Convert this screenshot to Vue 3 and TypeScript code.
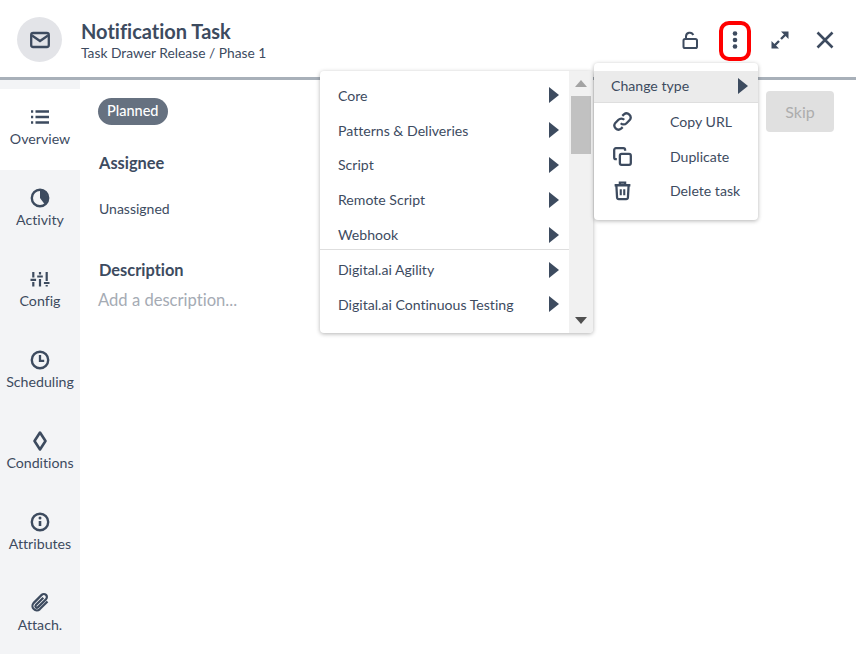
<template>
  <div class="drawer">
    <header class="drawer-header">
      <div class="avatar">
        <svg viewBox="0 0 24 24" class="avatar-icon">
          <rect x="3.2" y="5" width="17.6" height="14" rx="2" fill="none" stroke="currentColor" stroke-width="2.300" />
          <path d="M4 7.500l8 5.500 8-5.500" fill="none" stroke="currentColor" stroke-width="2.300" />
        </svg>
      </div>
      <div class="titles">
        <div class="title">Notification Task</div>
        <div class="subtitle">Task Drawer Release / Phase 1</div>
      </div>
      <div class="actions">
        <button class="action">
          <svg viewBox="0 0 24 24">
            <rect x="5.500" y="11" width="13.500" height="9" rx="1.600" fill="none" stroke="currentColor" stroke-width="2" />
            <path d="M8 11V8.500a3.800 3.800 0 0 1 7.300-1.500" fill="none" stroke="currentColor" stroke-width="2" />
          </svg>
        </button>
        <button class="action action-more">
          <svg viewBox="0 0 24 24">
            <circle cx="12" cy="5.500" r="2.300" fill="currentColor" />
            <circle cx="12" cy="12" r="2.300" fill="currentColor" />
            <circle cx="12" cy="18.500" r="2.300" fill="currentColor" />
          </svg>
        </button>
        <button class="action">
          <svg viewBox="0 0 24 24">
            <path d="M19 5l-6 6M5 19l6-6" fill="none" stroke="currentColor" stroke-width="2.400" />
            <path d="M13 3.500h7.500V11zM11 20.500H3.500V13z" fill="currentColor" />
          </svg>
        </button>
        <button class="action">
          <svg viewBox="0 0 24 24">
            <path d="M4.500 4.500l15 15M19.500 4.500l-15 15" fill="none" stroke="currentColor" stroke-width="2.600" />
          </svg>
        </button>
      </div>
    </header>

    <div class="drawer-body">
      <nav class="tabs">
        <div v-for="tab in tabs" :key="tab.label" class="tab" :class="{ active: tab.label === 'Overview' }">
          <svg viewBox="0 0 24 24" class="tab-icon" v-html="tab.icon"></svg>
          <span>{{ tab.label }}</span>
        </div>
      </nav>

      <main class="content">
        <div class="top-row">
          <span class="pill">Planned</span>
          <button class="skip">Skip</button>
        </div>
        <h4 class="label assignee">Assignee</h4>
        <div class="unassigned">Unassigned</div>
        <h4 class="label description">Description</h4>
        <div class="placeholder">Add a description...</div>
      </main>
    </div>

    <!-- type submenu -->
    <div class="menu type-menu">
      <div class="type-list">
        <div v-for="item in taskTypes" :key="item.name" class="type-item" :class="{ 'with-divider': item.divider }">
          <span>{{ item.name }}</span>
          <i class="caret"></i>
        </div>
      </div>
      <div class="scrollbar">
        <i class="arrow-up"></i>
        <div class="thumb"></div>
        <i class="arrow-down"></i>
      </div>
    </div>

    <!-- task menu -->
    <div class="menu task-menu">
      <div class="change-type">
        <span>Change type</span>
        <i class="caret"></i>
      </div>
      <div v-for="item in taskActions" :key="item.label" class="task-item">
        <svg viewBox="0 0 24 24" class="task-icon" v-html="item.icon"></svg>
        <span>{{ item.label }}</span>
      </div>
    </div>

    <div class="highlight"></div>
  </div>
</template>

<script setup lang="ts">
interface Tab {
  label: string
  icon: string
}

const line = (w: number) => `fill="none" stroke="currentColor" stroke-width="${w}"`

const tabs: Tab[] = [
  {
    label: 'Overview',
    icon: `<path d="M7.500 6.500H21M7.500 12H21M7.500 17.500H21" ${line(2.4)}/><path d="M3 6.500h2.200M3 12h2.200M3 17.500h2.200" ${line(2.4)}/>`
  },
  {
    label: 'Activity',
    icon: `<circle cx="12" cy="12" r="8.200" ${line(2.4)}/><path d="M12 4.500V12l4.500 6A7.500 7.500 0 0 0 12 4.500z" fill="currentColor"/>`
  },
  {
    label: 'Config',
    icon: `<path d="M5.300 5v5.500M5.300 15v4.500M12 5v2.500M12 12v7.500M18.700 5v9M18.700 18v1.500M2.500 12.800h5.600M9.200 9.500h5.600M15.900 16h5.600" ${line(2.2)}/>`
  },
  {
    label: 'Scheduling',
    icon: `<circle cx="12" cy="12" r="8.200" ${line(2.4)}/><path d="M12 7v5.800h4.200" ${line(2.3)}/>`
  },
  {
    label: 'Conditions',
    icon: `<path d="M12 3.500l5.500 8.500-5.500 8.500L6.500 12z" ${line(2.6)} stroke-linejoin="round"/>`
  },
  {
    label: 'Attributes',
    icon: `<circle cx="12" cy="12" r="8.200" ${line(2.4)}/><path d="M12 11v5" ${line(2.6)}/><circle cx="12" cy="8" r="1.500" fill="currentColor"/>`
  },
  {
    label: 'Attach.',
    icon: `<path d="M19.500 10.500l-7.800 7.800a4.400 4.400 0 0 1-6.200-6.200l8.200-8.200a3 3 0 0 1 4.300 4.300l-8.200 8.200a1.500 1.500 0 0 1-2.100-2.100l7.600-7.600" ${line(2.2)}/>`
  }
]

const taskTypes = [
  { name: 'Core' },
  { name: 'Patterns & Deliveries' },
  { name: 'Script' },
  { name: 'Remote Script' },
  { name: 'Webhook', divider: true },
  { name: 'Digital.ai Agility' },
  { name: 'Digital.ai Continuous Testing' }
]

const taskActions: Tab[] = [
  {
    label: 'Copy URL',
    icon: `<path d="M10 14a4.600 4.600 0 0 0 6.600 0l3.600-3.600a4.700 4.700 0 0 0-6.600-6.600l-1.800 1.800" ${line(2.6)}/><path d="M14 10a4.600 4.600 0 0 0-6.600 0l-3.600 3.600a4.700 4.700 0 0 0 6.600 6.600l1.800-1.800" ${line(2.6)}/>`
  },
  {
    label: 'Duplicate',
    icon: `<rect x="9" y="9" width="12.500" height="12.500" rx="2" ${line(2.6)}/><path d="M5.500 15H4.500a2 2 0 0 1-2-2V4.500a2 2 0 0 1 2-2H13a2 2 0 0 1 2 2v1" ${line(2.6)}/>`
  },
  {
    label: 'Delete task',
    icon: `<path d="M3 6h18M9 6V3h6v3" ${line(2.6)}/><path d="M5 6l.8 14a2 2 0 0 0 2 1.800h8.400a2 2 0 0 0 2-1.800L19 6" ${line(2.6)}/><path d="M10 10.500v7M14 10.500v7" ${line(2.4)}/>`
  }
]
</script>

<style>
html,
body {
  margin: 0;
  background: #fff;
}
</style>

<style scoped>
.drawer {
  position: relative;
  width: 856px;
  height: 654px;
  overflow: hidden;
  display: flex;
  flex-direction: column;
  font-family: Lato, "Liberation Sans", sans-serif;
  font-variant-ligatures: none;
  color: #3d4b5f;
  background: #fff;
}

.drawer-header {
  height: 80px;
  box-sizing: border-box;
  flex: none;
  display: flex;
  align-items: flex-start;
  border-bottom: 3px solid #a8b0b9;
  padding: 17px 15px 0 17px;
}

.avatar {
  width: 45px;
  height: 45px;
  flex: none;
  border-radius: 50%;
  background: #e3e4e8;
  display: flex;
  align-items: center;
  justify-content: center;
}

.avatar-icon {
  width: 24px;
  height: 24px;
}

.titles {
  margin-left: 19px;
  flex: 1;
}

.title {
  font-size: 20px;
  font-weight: 700;
  line-height: 28px;
}

.subtitle {
  font-size: 13.800px;
  line-height: 16px;
}

.actions {
  display: flex;
  gap: 13px;
  margin-top: 7px;
}

.action {
  width: 32px;
  height: 32px;
  padding: 4px;
  background: none;
  border: none;
  color: inherit;
}

.action svg {
  display: block;
  width: 24px;
  height: 24px;
}

.drawer-body {
  flex: 1;
  display: flex;
  min-height: 0;
}

.tabs {
  width: 80px;
  flex: none;
  background: #f3f4f6;
  padding-top: 9px;
}

.tab {
  height: 81px;
  box-sizing: border-box;
  padding-top: 16px;
  display: flex;
  flex-direction: column;
  align-items: center;
  font-size: 14.200px;
  line-height: 18px;
  gap: 1px;
}

.tab.active {
  background: #fff;
}

.tab-icon {
  width: 24px;
  height: 24px;
}

.content {
  flex: 1;
  padding: 18px 22px 0 18px;
}

.top-row {
  display: flex;
  justify-content: space-between;
  align-items: flex-start;
}

.pill {
  height: 27px;
  line-height: 26px;
  padding: 0 9px;
  border-radius: 14px;
  background: #667180;
  color: #fff;
  font-size: 14.500px;
  font-weight: 500;
}

.skip {
  width: 68px;
  height: 41px;
  margin-top: -7px;
  border: none;
  border-radius: 4px;
  background: #e0e0e0;
  color: #adadad;
  font: inherit;
  font-size: 16px;
}

.label {
  margin: 0 0 0 1px;
  font-size: 16.400px;
  font-weight: 700;
  line-height: 20px;
}

.assignee {
  margin-top: 21px;
}

.unassigned {
  margin: 27px 0 0 1px;
  font-size: 14px;
  line-height: 18px;
}

.description {
  margin-top: 42px;
}

.placeholder {
  margin-top: 10px;
  color: #a5abb4;
  font-size: 16.600px;
  line-height: 20px;
}

.menu {
  position: absolute;
  background: #fff;
  border-radius: 4px;
  box-shadow: 0 1px 4px rgba(0, 0, 0, 0.3);
  font-size: 14.100px;
}

.type-menu {
  left: 320px;
  top: 71px;
  width: 273px;
  height: 262px;
  display: flex;
  overflow: hidden;
}

.type-list {
  flex: 1;
  padding-top: 7px;
}

.type-item {
  height: 34.800px;
  box-sizing: border-box;
  padding: 0 10px 0 18px;
  display: flex;
  align-items: center;
  justify-content: space-between;
}

.with-divider {
  height: 33px;
  margin-bottom: 2px;
  padding-top: 3px;
  border-bottom: 1px solid #dedede;
}

.caret {
  width: 0;
  height: 0;
  border-left: 10px solid #3d4b5f;
  border-top: 8px solid transparent;
  border-bottom: 8px solid transparent;
}

.scrollbar {
  position: relative;
  width: 24px;
  flex: none;
  background: #f1f1f1;
}

.thumb {
  position: absolute;
  left: 2px;
  right: 2px;
  top: 25px;
  height: 58px;
  background: #c1c1c1;
}

.arrow-up,
.arrow-down {
  position: absolute;
  left: 6px;
  width: 0;
  height: 0;
  border-left: 6px solid transparent;
  border-right: 6px solid transparent;
}

.arrow-up {
  top: 9px;
  border-bottom: 7px solid #a3a3a3;
}

.arrow-down {
  bottom: 9px;
  border-top: 7px solid #505050;
}

.task-menu {
  left: 594px;
  top: 63px;
  width: 164px;
  height: 157px;
  padding-top: 8px;
  box-sizing: border-box;
}

.change-type {
  height: 32px;
  box-sizing: border-box;
  padding: 0 10px 2px 17px;
  display: flex;
  align-items: center;
  justify-content: space-between;
  background: #ebebeb;
  border-bottom: 1px solid #dedede;
  margin-bottom: 2px;
}

.task-item {
  height: 34.700px;
  box-sizing: border-box;
  padding: 0 0 2px 18px;
  display: flex;
  align-items: center;
}

.task-icon {
  width: 21px;
  height: 21px;
  flex: none;
  margin-right: 37px;
}

.highlight {
  position: absolute;
  left: 719px;
  top: 21px;
  width: 32px;
  height: 40px;
  box-sizing: border-box;
  border: 4px solid #f00;
  border-radius: 10px;
  pointer-events: none;
}
</style>
